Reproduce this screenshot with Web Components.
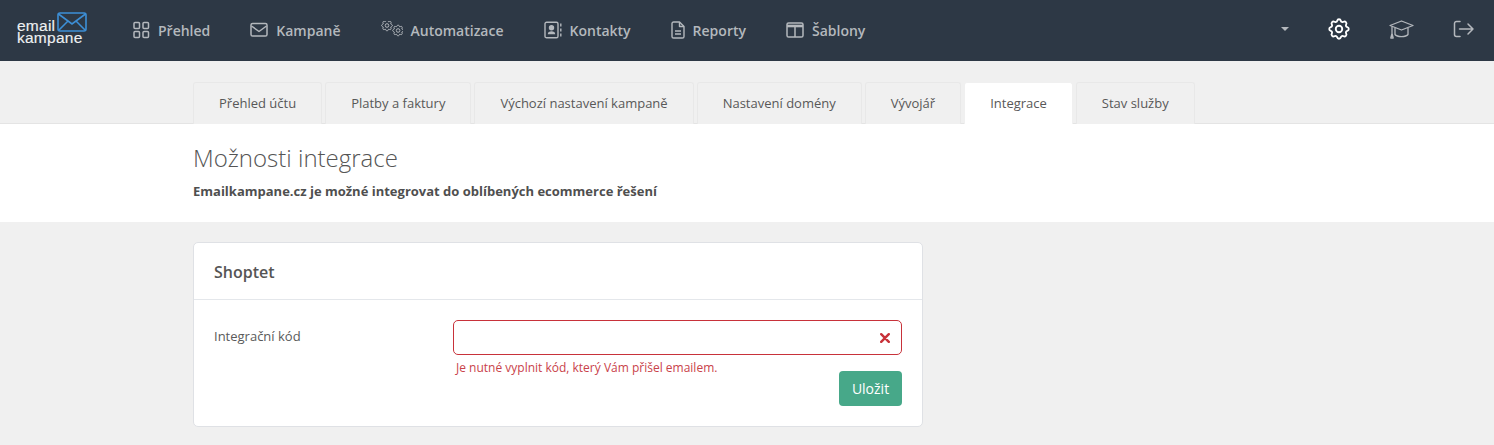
<!DOCTYPE html>
<html lang="cs">
<head>
<meta charset="utf-8">
<title>Integrace</title>
<style>
  html, body { margin: 0; padding: 0; }
  body {
    background: #f0f0f0;
    font-family: "Open Sans", "Liberation Sans", sans-serif;
    color: #555;
    height: 445px;
    overflow: hidden;
  }
</style>
</head>
<body>
<app-header>
  <nav-item label="Přehled" icon="grid"></nav-item>
  <nav-item label="Kampaně" icon="mail"></nav-item>
  <nav-item label="Automatizace" icon="gears"></nav-item>
  <nav-item label="Kontakty" icon="contact"></nav-item>
  <nav-item label="Reporty" icon="file"></nav-item>
  <nav-item label="Šablony" icon="layout"></nav-item>
</app-header>
<tab-bar>
  <tab-item>Přehled účtu</tab-item>
  <tab-item>Platby a faktury</tab-item>
  <tab-item>Výchozí nastavení kampaně</tab-item>
  <tab-item>Nastavení domény</tab-item>
  <tab-item>Vývojář</tab-item>
  <tab-item active>Integrace</tab-item>
  <tab-item>Stav služby</tab-item>
</tab-bar>
<page-banner heading="Možnosti integrace">Emailkampane.cz je možné integrovat do oblíbených ecommerce řešení</page-banner>
<integration-card heading="Shoptet" label="Integrační kód" error="Je nutné vyplnit kód, který Vám přišel emailem." action="Uložit"></integration-card>

<script>
const gearPath = "M10.325 4.317c.426-1.756 2.924-1.756 3.35 0a1.724 1.724 0 0 0 2.573 1.066c1.543-.94 3.31.826 2.37 2.37a1.724 1.724 0 0 0 1.065 2.572c1.756.426 1.756 2.924 0 3.35a1.724 1.724 0 0 0-1.066 2.573c.94 1.543-.826 3.31-2.37 2.37a1.724 1.724 0 0 0-2.572 1.065c-.426 1.756-2.924 1.756-3.35 0a1.724 1.724 0 0 0-2.573-1.066c-1.543.94-3.31-.826-2.37-2.37a1.724 1.724 0 0 0-1.065-2.572c-1.756-.426-1.756-2.924 0-3.35a1.724 1.724 0 0 0 1.066-2.573c-.94-1.543.826-3.31 2.37-2.37 1 .608 2.296.07 2.572-1.065z";

const icons = {
  grid: `<svg width="18" height="18" viewBox="0 0 18 18" fill="none" stroke="currentColor" stroke-width="1.5"><rect x="2" y="1.5" width="5.500" height="6" rx="1"/><rect x="11" y="1.5" width="5.500" height="6" rx="1"/><rect x="2" y="10.500" width="5.500" height="6" rx="1"/><rect x="11" y="10.500" width="5.500" height="6" rx="1"/></svg>`,
  mail: `<svg width="18" height="18" viewBox="0 0 18 18" fill="none" stroke="currentColor" stroke-width="1.5" stroke-linejoin="round"><rect x="1" y="2.500" width="16" height="12.500" rx="1.6"/><path d="M1.500 5 9 10.500 16.500 5"/></svg>`,
  gears: `<svg width="22" height="18" viewBox="0 0 22 18" fill="none" stroke="currentColor" stroke-linejoin="round"><g transform="translate(-1.200 -2.700) scale(.6)" stroke-width="1.6"><path d="${gearPath}"/><circle cx="12" cy="12" r="3"/></g><g transform="translate(9.900 2.300) scale(.6)" stroke-width="1.6"><path d="${gearPath}"/><circle cx="12" cy="12" r="3"/></g></svg>`,
  contact: `<svg width="18" height="18" viewBox="0 0 18 18" fill="none" stroke="currentColor" stroke-width="1.4"><rect x="1" y="1.2" width="13" height="15.6" rx="1.6"/><circle cx="7.5" cy="6.8" r="2" fill="currentColor"/><path d="M3.8 13.2c0-2.2 1.6-3 3.7-3s3.7.8 3.7 3z" fill="currentColor" stroke="none"/><path d="M16.8 2.500v3M16.800 7.500v3M16.800 12.500v3"/></svg>`,
  file: `<svg width="14" height="18" viewBox="0 0 14 18" fill="none" stroke="currentColor" stroke-width="1.4" stroke-linejoin="round"><path d="M8.500 1H2.600C1.700 1 1 1.700 1 2.600v12.800c0 .9.700 1.600 1.600 1.600h8.800c.9 0 1.600-.7 1.600-1.600V5.500z"/><path d="M8.500 1v4.500H13M4 10h6M4 13h6"/></svg>`,
  layout: `<svg width="18" height="18" viewBox="0 0 18 18" fill="none" stroke="currentColor" stroke-width="1.5"><rect x="1" y="2" width="16" height="14" rx="1.6"/><path d="M1 5h16" stroke-width="2.600"/><path d="M9 5v11"/></svg>`
};

class NavItem extends HTMLElement {
  constructor() {
    super();
    this.attachShadow({ mode: "open" });
    this.shadowRoot.innerHTML = `
      <style>
        :host { display: flex; align-items: center; gap: 8px; color: #b4b8bd; font-size: 14px; font-weight: 600; white-space: nowrap; }
        svg { display: block; }
      </style>
      ${icons[this.getAttribute("icon")]}
      <span>${this.getAttribute("label")}</span>
    `;
  }
}

class AppHeader extends HTMLElement {
  constructor() {
    super();
    this.attachShadow({ mode: "open" });
    this.shadowRoot.innerHTML = `
      <style>
        :host { display: flex; align-items: center; height: 61px; background: #2d3845; padding: 0 19px 1px 17px; box-sizing: border-box; }
        .logo { width: 70px; margin: -4px 45px 0 0; color: #eef0f2; font: 15.500px/12px "Liberation Sans", sans-serif; letter-spacing: .25px; -webkit-text-stroke: .15px #eef0f2; flex: none; }
        .logo .top { display: flex; align-items: flex-end; gap: 2px; }
        .logo svg { display: block; flex: none; }
        nav { display: flex; gap: 40px; }
        .right { margin-left: auto; display: flex; align-items: center; color: #b4b8bd; margin-top: -2px; }
        .caret { width: 0; height: 0; border: 4px solid transparent; border-top-color: #b4b8bd; border-bottom: 0; margin-right: 37px; }
        .right svg { display: block; }
        .gear { color: #fff; margin-right: 37px; }
        .hat { margin-right: 39px; }
      </style>
      <div class="logo">
        <div class="top"><span>email</span>
          <svg width="30" height="20" viewBox="0 0 30 20" fill="none" stroke="#3d8fd6" stroke-width="1.6"><rect x="1" y="1" width="28" height="18" rx="2"/><path d="M1.500 2 15 12 28.500 2M2 18l9-9M28 18l-9-9"/></svg>
        </div>
        <div>kampane</div>
      </div>
      <nav><slot></slot></nav>
      <div class="right">
        <span class="caret"></span>
        <svg class="gear" width="26" height="26" viewBox="0 0 24 24" fill="none" stroke="currentColor" stroke-width="1.700" stroke-linejoin="round"><path d="${gearPath}"/><circle cx="12" cy="12" r="3"/></svg>
        <svg class="hat" width="25" height="19" viewBox="0 0 25 19" fill="none" stroke="currentColor" stroke-width="1.3" stroke-linejoin="round"><path d="M1 5.500 12.500 1 24 5.500 12.500 10z"/><path d="M6 8v6.500c2 2.700 11 2.700 13 0V8"/><path d="M3 6.500v7M1.800 18l1.200-4.500L4.200 18z"/></svg>
        <svg width="22" height="18" viewBox="0 0 22 18" fill="none" stroke="currentColor" stroke-width="1.5" stroke-linecap="round" stroke-linejoin="round"><path d="M7 1.500H3.500A2 2 0 0 0 1.500 3.500v11a2 2 0 0 0 2 2H7"/><path d="M6.500 9H20M15 4l5 5-5 5"/></svg>
      </div>
    `;
  }
}

class TabBar extends HTMLElement {
  constructor() {
    super();
    this.attachShadow({ mode: "open" });
    this.shadowRoot.innerHTML = `
      <style>
        :host { display: flex; gap: 3px; height: 63px; box-sizing: border-box; padding: 21px 0 0 193px; border-bottom: 1px solid #e4e4e4; }
      </style>
      <slot></slot>
    `;
  }
}

class TabItem extends HTMLElement {
  constructor() {
    super();
    this.attachShadow({ mode: "open" });
    this.shadowRoot.innerHTML = `
      <style>
        :host { display: flex; align-items: center; height: 42px; box-sizing: border-box; padding: 0 25px 2px; font-size: 13px; color: #585858; background: #f0f0f0; border: 1px solid #e8e8e8; border-bottom: 0; border-radius: 3px 3px 0 0; white-space: nowrap; }
        :host([active]) { background: #fff; border-color: #f0f0f0; position: relative; z-index: 1; }
      </style>
      <slot></slot>
    `;
  }
}

class PageBanner extends HTMLElement {
  constructor() {
    super();
    this.attachShadow({ mode: "open" });
    this.shadowRoot.innerHTML = `
      <style>
        :host { display: block; height: 98px; box-sizing: border-box; background: #fff; padding: 18px 0 0 193px; }
        h1 { margin: 0; font-size: 24px; line-height: 32px; font-weight: 300; color: #555; }
        p { margin: 9px 0 0; font-size: 13px; line-height: 17px; font-weight: 700; color: #4f4f4f; }
      </style>
      <h1>${this.getAttribute("heading")}</h1>
      <p><slot></slot></p>
    `;
  }
}

class IntegrationCard extends HTMLElement {
  constructor() {
    super();
    this.attachShadow({ mode: "open" });
    this.shadowRoot.innerHTML = `
      <style>
        :host { display: block; width: 730px; height: 185px; box-sizing: border-box; margin: 20px 0 0 193px; background: #fff; border: 1px solid #dfe1e5; border-radius: 5px; }
        header { height: 57px; box-sizing: border-box; padding: 2px 20px 0; display: flex; align-items: center; border-bottom: 1px solid #e4e7eb; font-size: 16px; font-weight: 600; color: #555; }
        .body { display: grid; grid-template-columns: 239px 449px; padding: 20px 20px 0; }
        label { font-size: 13px; line-height: 34px; color: #5a5a5a; margin-top: -1px; }
        .input { height: 35px; box-sizing: border-box; border: 1px solid #c8323a; border-radius: 5px; display: flex; align-items: center; justify-content: flex-end; padding-right: 11px; }
        .input svg { display: block; }
        .error { margin: 4px 0 0 3px; font-size: 12px; line-height: 17px; color: #c9424a; }
        .actions { display: flex; justify-content: flex-end; margin-top: -5px; }
        button { font: 400 14px "Open Sans", sans-serif; width: 63px; height: 35px; border: 0; border-radius: 4px; background: #47a889; color: #fff; padding: 0; }
      </style>
      <header>${this.getAttribute("heading")}</header>
      <div class="body">
        <label>${this.getAttribute("label")}</label>
        <div>
          <div class="input"><svg width="10" height="10" viewBox="0 0 10 10" stroke="#c8323a" stroke-width="2.400" stroke-linecap="round"><path d="M1.200 1.200l7.600 7.600M8.800 1.200 1.200 8.800"/></svg></div>
          <div class="error">${this.getAttribute("error")}</div>
          <div class="actions"><button>${this.getAttribute("action")}</button></div>
        </div>
      </div>
    `;
  }
}

customElements.define("nav-item", NavItem);
customElements.define("app-header", AppHeader);
customElements.define("tab-bar", TabBar);
customElements.define("tab-item", TabItem);
customElements.define("page-banner", PageBanner);
customElements.define("integration-card", IntegrationCard);
</script>
</body>
</html>
